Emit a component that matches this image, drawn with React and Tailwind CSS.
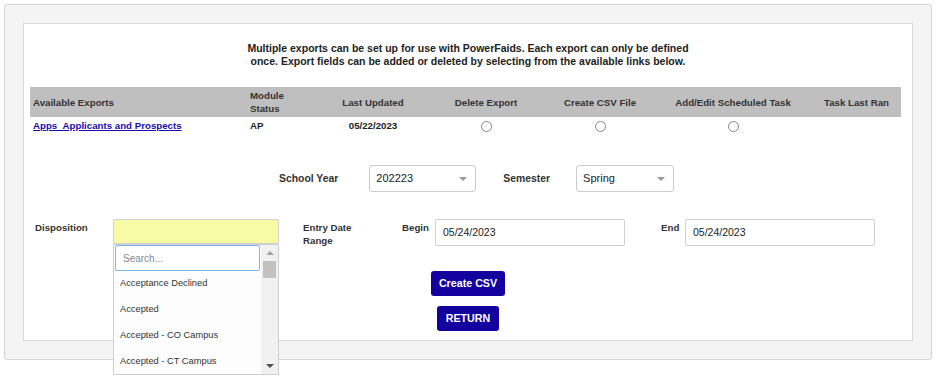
import React from 'react';

const columns = [
  { label: 'Available Exports', w: 'w-[217px]', align: 'text-left' },
  { label: 'Module Status', w: 'w-[73px]', align: 'text-left' },
  { label: 'Last Updated', w: 'w-[106px]', align: 'text-center' },
  { label: 'Delete Export', w: 'w-[120px]', align: 'text-center' },
  { label: 'Create CSV File', w: 'w-[108px]', align: 'text-center' },
  { label: 'Add/Edit Scheduled Task', w: 'w-[158px]', align: 'text-center' },
  { label: 'Task Last Ran', w: 'w-[89px]', align: 'text-center' },
];

const dispositions = [
  'Acceptance Declined',
  'Accepted',
  'Accepted - CO Campus',
  'Accepted - CT Campus',
];

function Radio() {
  return (
    <span className="inline-block w-[11px] h-[11px] rounded-full border border-[#858585] bg-white align-middle" />
  );
}

function Select({ value, width }) {
  return (
    <div className={`${width} h-[27px] flex items-center justify-between border border-[#cccccc] rounded-[3px] bg-white pl-[6px] pr-[8px] text-[11px] text-[#222]`}>
      <span>{value}</span>
      <span className="w-0 h-0 border-l-[4px] border-r-[4px] border-t-[4px] border-l-transparent border-r-transparent border-t-[#999]" />
    </div>
  );
}

function DispositionDropdown() {
  return (
    <div className="absolute left-0 top-[25px] w-[166px] h-[131px] border border-[#cfcfcf] bg-[#fdfdfd] flex z-10 font-normal overflow-hidden">
      <div className="flex-1 flex flex-col">
        <div className="shrink-0 h-[26px] mx-[1px] border border-[#7fb2f0] rounded-[2px] bg-white flex items-center pl-[7px] text-[10px] text-[#888]">
          Search...
        </div>
        {dispositions.map((d) => (
          <div key={d} className="shrink-0 h-[26px] flex items-center pl-[6px] pb-[1px] text-[9.3px] text-[#333]">
            {d}
          </div>
        ))}
      </div>
      <div className="w-[17px] bg-[#f1f1f1] flex flex-col items-center">
        <span className="mt-[6px] w-0 h-0 border-l-[4px] border-r-[4px] border-b-[4px] border-l-transparent border-r-transparent border-b-[#a3a3a3]" />
        <span className="mt-[6px] w-[13px] h-[17px] bg-[#c1c1c1]" />
        <span className="mt-auto mb-[6px] w-0 h-0 border-l-[4px] border-r-[4px] border-t-[4px] border-l-transparent border-r-transparent border-t-[#505050]" />
      </div>
    </div>
  );
}

export default function App() {
  return (
    <div className="w-[936px] h-[381px] bg-white font-['Liberation_Sans',Arial,sans-serif] text-[#222] pt-[4px] pl-[4px]">
      <div className="w-[928px] border border-[#d6d6d6] rounded-[3px] bg-[#f4f4f4] p-[18px]">
        <div className="border border-[#d9d9d9] bg-white pt-[18px] pb-[9px] px-[6px]">
          {/* Intro */}
          <p className="text-center text-[10.5px] leading-[13px] font-bold text-[#222]">
            Multiple exports can be set up for use with PowerFaids. Each export can only be defined
            <br />
            once. Export fields can be added or deleted by selecting from the available links below.
          </p>

          {/* Exports table */}
          <table className="mt-[19px] w-[871px] border-collapse table-fixed text-[9.7px] font-bold">
            <thead>
              <tr className="bg-[#bfbfbf] h-[30px]">
                {columns.map((c) => (
                  <th key={c.label} className={`${c.w} ${c.align} px-[3px] font-bold leading-[13px] text-[#333]`}>
                    {c.label === 'Module Status' ? (<>Module<br />Status</>) : c.label}
                  </th>
                ))}
              </tr>
            </thead>
            <tbody>
              <tr className="h-[18px]">
                <td className="px-[3px]">
                  <a href="#" className="text-[#1a0dab] underline">Apps&nbsp;&nbsp;Applicants and Prospects</a>
                </td>
                <td className="px-[3px]">AP</td>
                <td className="text-center">05/22/2023</td>
                <td className="text-center"><Radio /></td>
                <td className="text-center"><Radio /></td>
                <td className="text-center"><Radio /></td>
                <td />
              </tr>
            </tbody>
          </table>

          {/* Year / semester */}
          <div className="mt-[30px] flex items-center pl-[249px]">
            <span className="text-[10.4px] font-bold text-[#333]">School Year</span>
            <div className="ml-[31px]"><Select value="202223" width="w-[107px]" /></div>
            <span className="ml-[27px] text-[10.4px] font-bold text-[#333]">Semester</span>
            <div className="ml-[26px]"><Select value="Spring" width="w-[98px]" /></div>
          </div>

          {/* Disposition / dates */}
          <div className="mt-[27px] flex items-start text-[9.7px] font-bold text-[#333]">
            <span className="ml-[5px] w-[78px] mt-[2px]">Disposition</span>
            <div className="relative">
              <div className="w-[166px] h-[25px] border border-[#d0d0d0] rounded-[2px] bg-[#f8fba5]" />
              <DispositionDropdown />
            </div>
            <span className="ml-[24px] w-[99px] mt-[2px] leading-[13px]">Entry Date<br />Range</span>
            <span className="w-[33px] mt-[2px]">Begin</span>
            <div className="w-[190px] h-[27px] border border-[#d0d0d0] rounded-[2px] flex items-center pl-[7px] text-[10.5px] font-normal text-[#222]">
              05/24/2023
            </div>
            <span className="ml-[36px] w-[24px] mt-[2px]">End</span>
            <div className="w-[190px] h-[27px] border border-[#d0d0d0] rounded-[2px] flex items-center pl-[7px] text-[10.5px] font-normal text-[#222]">
              05/24/2023
            </div>
          </div>

          {/* Buttons */}
          <div className="mt-[24px] flex flex-col items-center gap-[10px]">
            <button className="h-[25px] px-[8px] rounded-[3px] bg-[#13009e] text-white text-[10.7px] font-bold">Create CSV</button>
            <button className="h-[25px] px-[9px] rounded-[3px] bg-[#13009e] text-white text-[10.7px] font-bold">RETURN</button>
          </div>
        </div>
      </div>
    </div>
  );
}
